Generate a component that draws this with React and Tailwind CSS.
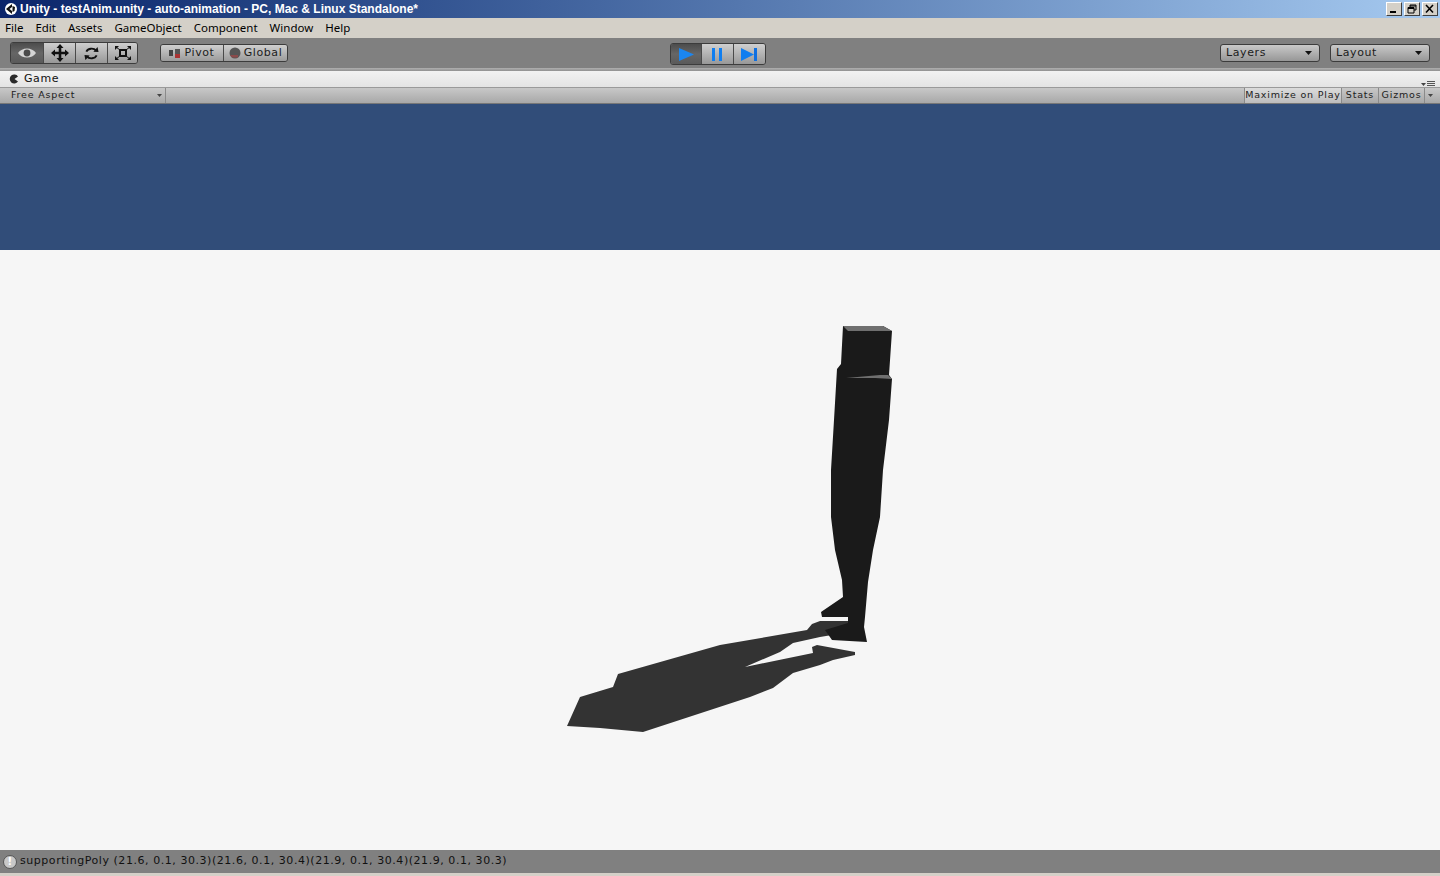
import { ChevronDown } from 'lucide-react';

const menus = ['File', 'Edit', 'Assets', 'GameObject', 'Component', 'Window', 'Help'];

function UnityLogo({ className }) {
  return (
    <svg viewBox="0 0 14 14" className={className}>
      <circle cx="7" cy="7" r="6" fill="#fff" />
      <path d="M2 7 L8 2 L8 5 L5.5 7 L8 9 L8 12 Z" fill="#111" />
      <path d="M8.5 4 L11 5 L10.5 9 L8.5 10 Z" fill="#111" />
    </svg>
  );
}

function WinButton({ children }) {
  return (
    <div className="w-[16px] h-[14px] bg-[#d4d0c8] border-t border-l border-t-white border-l-white border-r border-b border-r-[#404040] border-b-[#404040] flex items-center justify-center">
      <svg viewBox="0 0 12 10" className="w-[12px] h-[10px]">{children}</svg>
    </div>
  );
}

function ToolSeg({ dark, className, children }) {
  return (
    <div
      className={
        'flex items-center justify-center h-full border-r border-r-[#4a4a4a] last:border-r-0 ' +
        (dark
          ? 'bg-gradient-to-b from-[#4c4c4c] via-[#666666] to-[#5a5a5a] '
          : 'bg-gradient-to-b from-[#cfcfcf] to-[#989898] ') +
        className
      }
    >
      {children}
    </div>
  );
}

function DropBtn({ label }) {
  return (
    <div className="w-[100px] h-[18px] rounded-[3px] border border-[#3c3c3c] bg-gradient-to-b from-[#c9c9c9] to-[#979797] flex items-center justify-between pl-[5px] pr-[7px] text-[11px] tracking-[0.6px] text-[#1c1c1c]">
      <span>{label}</span>
      <svg viewBox="0 0 7 4" className="w-[7px] h-[4px]"><path d="M0 0H7L3.5 4Z" fill="#111" /></svg>
    </div>
  );
}

function TinyArrow() {
  return <svg viewBox="0 0 5 3" className="w-[5px] h-[3px]"><path d="M0 0H5L2.5 3Z" fill="#444" /></svg>;
}

function Scene() {
  return (
    <svg viewBox="0 104 1440 746" className="absolute inset-0 w-full h-full">
      {/* shadow on the floor */}
      <path
        fill="#333333"
        d="M567 726 L580 697 L613 687 L618 674 L720 645 L807 630 L812 624 L820 621 L848 621 L850 632 L820 637 L793 643 L780 652 L745 667 L813 653 L812 647 L817 645 L855 652 L855 655 L833 660 L820 665 L793 673 L773 688 L750 697 L643 732 L600 728 Z"
      />
      {/* leg */}
      <path
        fill="#1a1a1a"
        d="M843 326 L883 326 L892 331 L889 375 L892 379 L889 420 L883 470 L880 517 L873 550 L868 582 L865 617 L864 627 L867 642 L832 640 L825 630 L848 623 L848 617 L822 617 L821 612 L843 597 L842 580 L835 550 L831 517 L831 470 L834 420 L837 369 L841 364 Z"
      />
      <path fill="#6f6f6f" d="M843 326 L883 326 L892 331 L848 331 Z" />
      <path fill="#6f6f6f" d="M846 378 L880 375 L888 375 L892 379 L875 378 Z" />
    </svg>
  );
}

export default function App() {
  return (
    <div className="w-[1440px] h-[876px] flex flex-col overflow-hidden bg-[#d4d0c8] font-['DejaVu_Sans','Liberation_Sans',sans-serif]">
      {/* title bar */}
      <div className="h-[18px] shrink-0 flex items-center justify-between pl-[4px] pr-[2px] bg-gradient-to-r from-[#0a246a] to-[#a6caf0]">
        <div className="flex items-center gap-[2px] font-['Liberation_Sans',sans-serif] font-bold text-[12px] text-white">
          <UnityLogo className="w-[14px] h-[14px]" />
          <span>Unity - testAnim.unity - auto-animation - PC, Mac &amp; Linux Standalone*</span>
        </div>
        <div className="flex items-center">
          <WinButton><rect x="2" y="7" width="6" height="2" fill="#000" /></WinButton>
          <div className="w-[2px]" />
          <WinButton>
            <path d="M4 1H10V6H8M4 1V3M4 2H10" fill="none" stroke="#000" />
            <path d="M2 3.5H8V9H2ZM2 4.5H8" fill="none" stroke="#000" />
          </WinButton>
          <div className="w-[2px]" />
          <WinButton><path d="M2 1L9 8.5M9 1L2 8.5" stroke="#000" strokeWidth="1.6" /></WinButton>
        </div>
      </div>

      {/* menu */}
      <div className="h-[20px] shrink-0 flex items-center gap-[12px] pl-[5px] font-['Noto_Sans',sans-serif] text-[11.5px] text-black">
        {menus.map((m) => <span key={m}>{m}</span>)}
      </div>

      {/* main toolbar */}
      <div className="h-[30px] shrink-0 relative flex items-center bg-[#808080] pl-[10px] pr-[10px]">
        <div className="w-[128px] h-[22px] rounded-[3px] border border-[#3c3c3c] overflow-hidden grid grid-cols-[33px_32px_32px_1fr]">
          <ToolSeg dark>
            <svg viewBox="0 0 20 12" className="w-[20px] h-[12px]">
              <path d="M1 6 C5 0 15 0 19 6 C15 12 5 12 1 6Z" fill="#d5d5d5" />
              <circle cx="10" cy="6" r="3.4" fill="#4a4a4a" />
            </svg>
          </ToolSeg>
          <ToolSeg>
            <svg viewBox="0 0 18 18" className="w-[18px] h-[18px]">
              <path d="M9 0L12.5 4H10.3V7.7H14V5.5L18 9L14 12.5V10.3H10.3V14H12.5L9 18L5.5 14H7.7V10.3H4V12.5L0 9L4 5.5V7.7H7.7V4H5.5Z" fill="#111" />
            </svg>
          </ToolSeg>
          <ToolSeg>
            <svg viewBox="0 0 16 16" className="w-[15px] h-[15px]">
              <path d="M2.5 6 A6 5 0 0 1 13 5" fill="none" stroke="#111" strokeWidth="2" />
              <path d="M10 6 L15.5 6.5 L14.5 1 Z" fill="#111" />
              <path d="M13.5 10 A6 5 0 0 1 3 11" fill="none" stroke="#111" strokeWidth="2" />
              <path d="M6 10 L0.5 9.5 L1.5 15 Z" fill="#111" />
            </svg>
          </ToolSeg>
          <ToolSeg>
            <svg viewBox="0 0 18 16" className="w-[18px] h-[16px]">
              <rect x="6" y="5" width="6" height="6" fill="none" stroke="#111" strokeWidth="2" />
              <path d="M1 1H5L1 5ZM17 1H13L17 5ZM1 15H5L1 11ZM17 15H13L17 11Z" fill="#111" />
              <path d="M2 2L6 5M16 2L12 5M2 14L6 11M16 14L12 11" stroke="#111" />
            </svg>
          </ToolSeg>
        </div>

        <div className="ml-[22px] w-[128px] h-[18px] rounded-[3px] border border-[#3c3c3c] overflow-hidden grid grid-cols-2 text-[11px] tracking-[0.6px] text-[#1c1c1c]">
          <ToolSeg className="gap-[4px]">
            <svg viewBox="0 0 11 9" className="w-[11px] h-[9px]">
              <rect x="0" y="1" width="4" height="6" fill="#444" />
              <rect x="6" y="0" width="5" height="9" fill="#555" />
              <rect x="6" y="5" width="5" height="4" fill="#a33" />
            </svg>
            <span>Pivot</span>
          </ToolSeg>
          <ToolSeg className="gap-[3px]">
            <svg viewBox="0 0 12 12" className="w-[12px] h-[12px]">
              <circle cx="6" cy="6" r="5.5" fill="#555" />
              <path d="M1 8H9V10.5H3Z" fill="#8c4a4a" />
            </svg>
            <span>Global</span>
          </ToolSeg>
        </div>

        {/* play buttons sit at the window's centre */}
        <div className="absolute left-[670px] top-[5px] w-[96px] h-[22px] rounded-[3px] border border-[#3c3c3c] overflow-hidden grid grid-cols-3">
          <ToolSeg dark>
            <svg viewBox="0 0 15 13" className="w-[15px] h-[13px]"><path d="M0 0L15 6.5L0 13Z" fill="#1b86f0" /></svg>
          </ToolSeg>
          <ToolSeg>
            <svg viewBox="0 0 10 13" className="w-[10px] h-[13px]"><path d="M0 0H3V13H0ZM7 0H10V13H7Z" fill="#0f7ef0" /></svg>
          </ToolSeg>
          <ToolSeg>
            <svg viewBox="0 0 16 13" className="w-[16px] h-[13px]"><path d="M0 0L13 6.5L0 13Z" fill="#0f7ef0" /><rect x="13" y="0" width="3" height="13" fill="#0f6fe0" /></svg>
          </ToolSeg>
        </div>

        <div className="ml-auto flex items-center gap-[10px]">
          <DropBtn label="Layers" />
          <DropBtn label="Layout" />
        </div>
      </div>

      {/* game tab */}
      <div className="h-[3px] shrink-0 bg-gradient-to-b from-[#b0b0b0] to-[#909090]" />
      <div className="h-[16px] shrink-0 relative flex items-center pl-[9px] gap-[5px] bg-gradient-to-b from-[#f2f2f2] to-[#e4e4e4] text-[11px] tracking-[0.6px] text-[#111]">
        <svg viewBox="0 0 10 10" className="w-[10px] h-[10px]">
          <path d="M9 2.5A4.5 4.5 0 1 0 9 7.5L5.5 5Z" fill="#2a2a2a" />
        </svg>
        <span>Game</span>
        <div className="absolute right-[5px] bottom-[1px] flex items-end gap-[1px]">
          <TinyArrow />
          <div className="w-[8px] h-[5px] border-t border-b border-[#555] relative">
            <div className="absolute left-0 right-0 top-[1px] h-px bg-[#555]" />
          </div>
        </div>
      </div>

      {/* game toolbar */}
      <div className="h-[17px] shrink-0 flex items-stretch px-[5px] bg-gradient-to-b from-[#c8c8c8] to-[#a8a8a8] border-t border-t-[#9a9a9a] border-b border-b-[#777777] text-[9.5px] tracking-[0.8px] text-[#1c1c1c]">
        <div className="w-[161px] flex items-center justify-between pl-[6px] pr-[3px] border-r border-r-[#8a8a8a]">
          <span>Free Aspect</span>
          <TinyArrow />
        </div>
        <div className="ml-auto flex items-stretch">
          <div className="w-[97px] flex items-center justify-center bg-gradient-to-b from-[#dcdcdc] to-[#bdbdbd] border-l border-l-[#8a8a8a]">Maximize on Play</div>
          <div className="w-[37px] flex items-center justify-center border-l border-l-[#8a8a8a]">Stats</div>
          <div className="w-[46px] flex items-center justify-center border-l border-l-[#8a8a8a]">Gizmos</div>
          <div className="w-[11px] flex items-center justify-center border-l border-l-[#8a8a8a]"><TinyArrow /></div>
        </div>
      </div>

      {/* game view */}
      <div className="flex-1 relative flex flex-col">
        <div className="h-[146px] bg-[#314d79]" />
        <div className="flex-1 bg-[#f6f6f6]" />
        <Scene />
      </div>

      {/* status */}
      <div className="h-[23px] shrink-0 flex items-center pl-[3px] gap-[3px] bg-[#808080] text-[11px] tracking-[0.55px] text-[#111]">
        <div className="w-[14px] h-[14px] rounded-full bg-[#c8c8c8] border border-[#555] flex items-center justify-center text-[10px] font-bold text-white leading-none">!</div>
        <span>supportingPoly (21.6, 0.1, 30.3)(21.6, 0.1, 30.4)(21.9, 0.1, 30.4)(21.9, 0.1, 30.3)</span>
      </div>
      <div className="h-[3px] shrink-0 bg-[#d4d0c8]" />
    </div>
  );
}
